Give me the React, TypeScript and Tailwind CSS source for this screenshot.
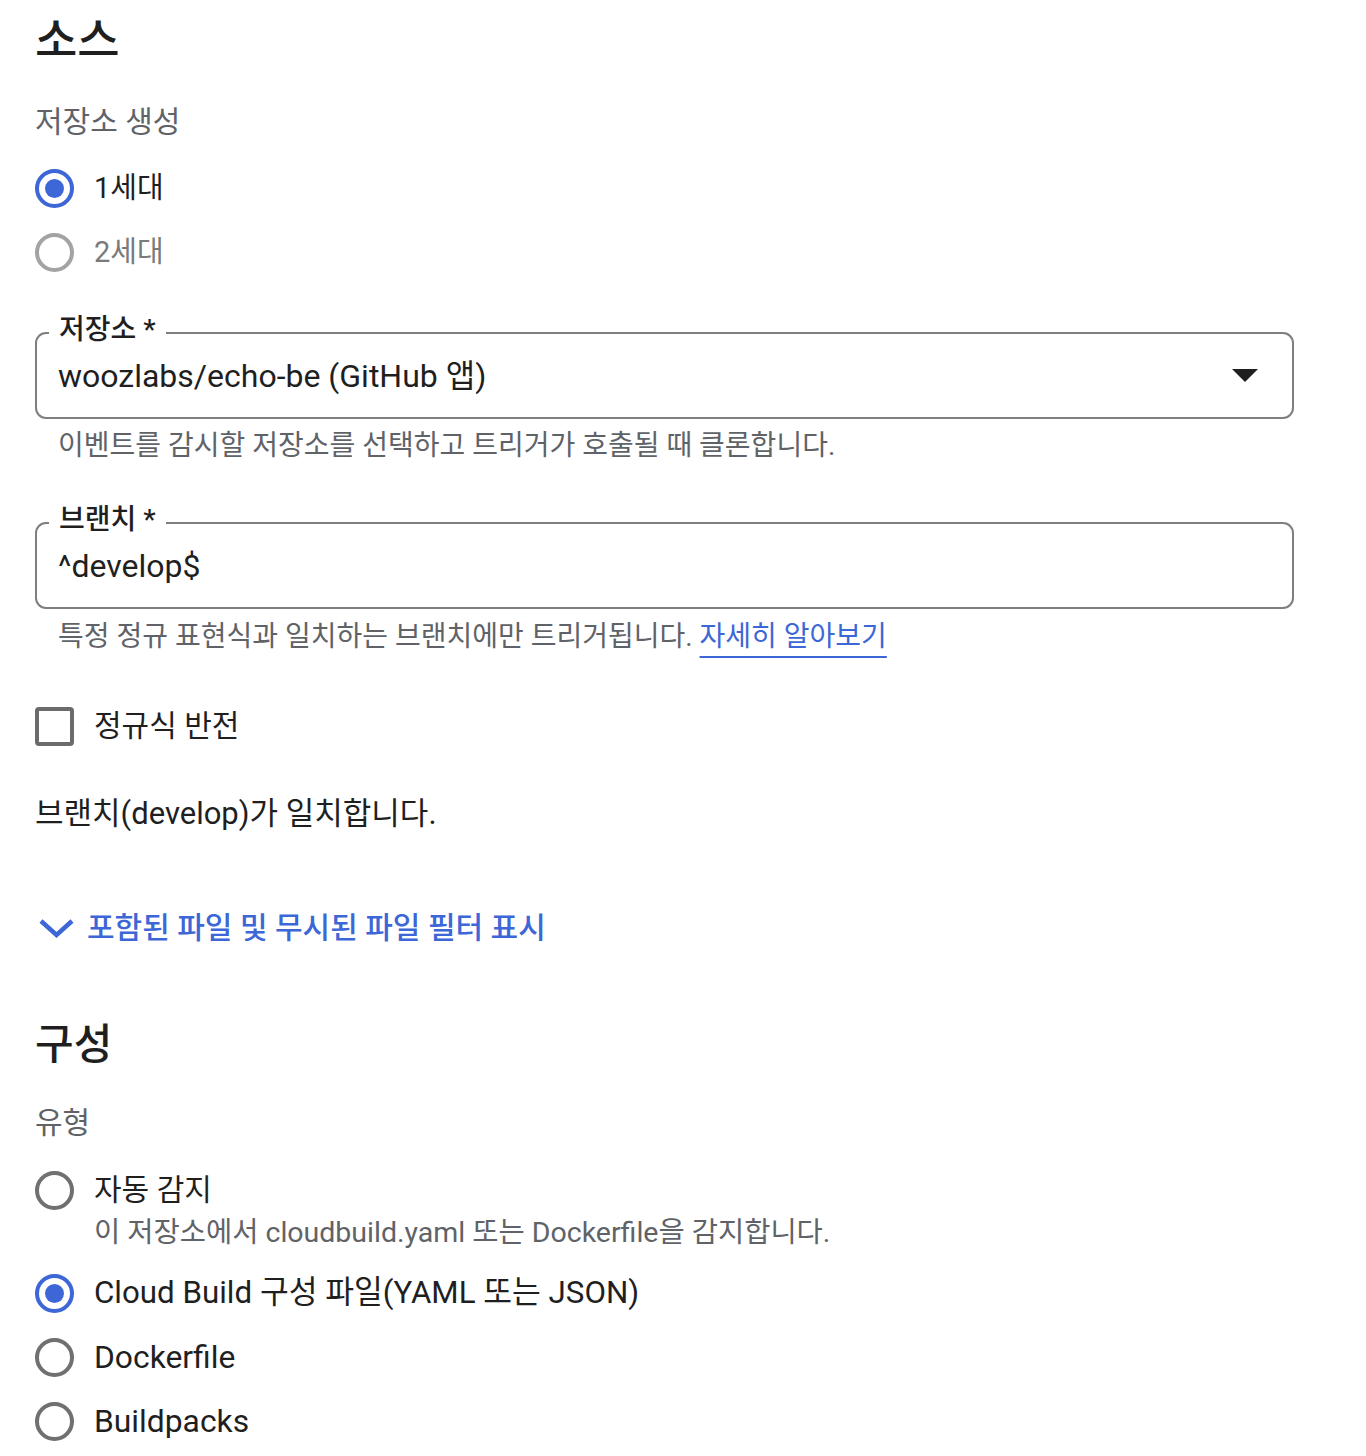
const font = "font-['Roboto','Noto_Sans_CJK_KR',sans-serif]";

function Radio({ checked, disabled }: { checked?: boolean; disabled?: boolean }) {
  if (checked) {
    return (
      <span className="flex h-[39px] w-[39px] shrink-0 items-center justify-center rounded-full border-[4px] border-[#3d67d6]">
        <span className="h-[19px] w-[19px] rounded-full bg-[#3d67d6]" />
      </span>
    );
  }
  return (
    <span
      className={`h-[39px] w-[39px] shrink-0 rounded-full border-[4px] ${
        disabled ? "border-[#a3a3a3]" : "border-[#707070]"
      }`}
    />
  );
}

function RadioRow({
  label,
  checked,
  disabled,
  size,
  h = "h-[64px]",
}: {
  label: string;
  checked?: boolean;
  disabled?: boolean;
  size: string;
  h?: string;
}) {
  return (
    <div className={`flex ${h} items-center gap-[20px]`}>
      <Radio checked={checked} disabled={disabled} />
      <span className={`${size} leading-[40px] ${disabled ? "text-[#7a7a7a]" : "text-[#1f1f1f]"}`}>
        {label}
      </span>
    </div>
  );
}

function Outlined({
  label,
  value,
  dropdown,
}: {
  label: string;
  value: string;
  dropdown?: boolean;
}) {
  return (
    <div className="relative flex h-[87px] items-center rounded-[11px] border-2 border-[#7f7f7f] pl-[21px] pr-[30px]">
      <span className="absolute left-[12px] top-[-24px] bg-white px-[10px] text-[28px] font-medium leading-[40px] text-[#1f1f1f]">
        {label}
      </span>
      <span className="flex-1 text-[32px] leading-[40px] text-[#1f1f1f]">{value}</span>
      {dropdown && (
        <svg width="26" height="13" viewBox="0 0 26 13" className="mr-[4px]">
          <polygon points="0,0 26,0 13,13" fill="#1f1f1f" />
        </svg>
      )}
    </div>
  );
}

export default function App() {
  return (
    <div className={`${font} min-h-[1456px] w-[1366px] bg-white pl-[35px] pr-[72px] pt-[16px]`}>
      {/* 소스 */}
      <h2 className="text-[46px] font-medium leading-[48px] text-[#1f1f1f]">소스</h2>

      <div className="mt-[38px] text-[30px] leading-[40px] text-[#5f6368]">저장소 생성</div>

      <div className="mt-[14px]">
        <RadioRow label="1세대" checked size="text-[29px]" />
        <RadioRow label="2세대" disabled size="text-[29px]" />
      </div>

      <div className="mt-[48px]">
        <Outlined label="저장소 *" value="woozlabs/echo-be (GitHub 앱)" dropdown />
        <p className="mt-[7px] pl-[23px] text-[28px] leading-[40px] text-[#5f6368]">
          이벤트를 감시할 저장소를 선택하고 트리거가 호출될 때 클론합니다.
        </p>
      </div>

      <div className="mt-[56px]">
        <Outlined label="브랜치 *" value="^develop$" />
        <p className="mt-[8px] pl-[23px] text-[28px] leading-[40px] text-[#5f6368]">
          특정 정규 표현식과 일치하는 브랜치에만 트리거됩니다.{" "}
          <a className="text-[#3d67d6] underline decoration-2 underline-offset-[10px]">자세히 알아보기</a>
        </p>
      </div>

      <div className="mt-[37px] flex h-[64px] items-center gap-[20px]">
        <span className="h-[39px] w-[39px] shrink-0 rounded-[4px] border-[4px] border-[#6b6b6b]" />
        <span className="text-[30px] leading-[40px] text-[#1f1f1f]">정규식 반전</span>
      </div>

      <div className="mt-[36px] text-[31px] leading-[40px] text-[#1f1f1f]">브랜치(develop)가 일치합니다.</div>

      <div className="mt-[74px] flex h-[40px] items-center gap-[12px] text-[#3d67d6]">
        <svg width="37" height="22" viewBox="0 0 37 22" className="ml-[3px]">
          <polyline points="3,4 18.5,18 34,4" fill="none" stroke="#3d67d6" strokeWidth="4.5" />
        </svg>
        <span className="text-[30px] font-medium leading-[40px]">포함된 파일 및 무시된 파일 필터 표시</span>
      </div>

      {/* 구성 */}
      <h2 className="mt-[73px] text-[42px] font-medium leading-[48px] text-[#1f1f1f]">구성</h2>

      <div className="mt-[34px] text-[30px] leading-[40px] text-[#5f6368]">유형</div>

      <div className="mt-[23px]">
        <RadioRow label="자동 감지" size="text-[30px]" h="h-[48px]" />
        <p className="mt-[1px] pl-[59px] text-[28.5px] leading-[36px] text-[#5f6368]">
          이 저장소에서 cloudbuild.yaml 또는 Dockerfile을 감지합니다.
        </p>
        <div className="mt-[10px]">
          <RadioRow label="Cloud Build 구성 파일(YAML 또는 JSON)" checked size="text-[31.3px]" />
          <RadioRow label="Dockerfile" size="text-[31.8px]" />
          <RadioRow label="Buildpacks" size="text-[31.8px]" />
        </div>
      </div>
    </div>
  );
}
